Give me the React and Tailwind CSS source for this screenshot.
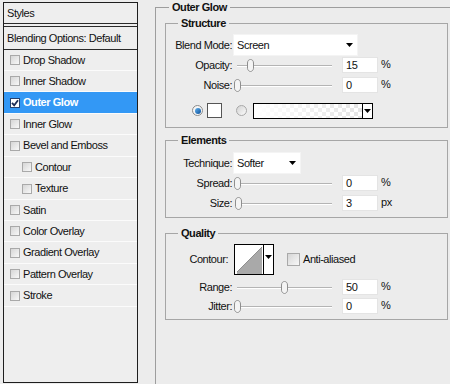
import React from "react";

function Checkbox({ checked, big }) {
  if (checked) {
    return (
      <span className="w-[10px] h-[10px] border border-[#26426e] bg-white flex items-center justify-center shrink-0">
        <svg width="8" height="8" viewBox="0 0 8 8">
          <path d="M1 3.8 L3.2 6.4 L7 1.2" stroke="#1d2d55" strokeWidth="1.8" fill="none" />
        </svg>
      </span>
    );
  }
  return (
    <span
      className={`block ${big ? "w-[13px] h-[13px]" : "w-[10px] h-[10px]"} border border-[#a9a9a9] bg-gradient-to-br from-[#d6d6d6] to-[#f8f8f8] shrink-0`}
    />
  );
}

const layers = [
  { label: "Drop Shadow", h: "h-[21px]" },
  { label: "Inner Shadow", h: "h-[21px]" },
  { label: "Outer Glow", h: "h-[22px]", selected: true },
  { label: "Inner Glow", h: "h-[21px]" },
  { label: "Bevel and Emboss", h: "h-[22px]" },
  { label: "Contour", h: "h-[21px]", indent: true },
  { label: "Texture", h: "h-[22px]", indent: true },
  { label: "Satin", h: "h-[21px]" },
  { label: "Color Overlay", h: "h-[21px]" },
  { label: "Gradient Overlay", h: "h-[22px]" },
  { label: "Pattern Overlay", h: "h-[21px]" },
  { label: "Stroke", h: "h-[22px]" },
];

function Thumb({ pos }) {
  return (
    <svg
      width="9"
      height="13"
      viewBox="0 0 9 13"
      className="absolute top-0"
      style={{ left: pos - 4 }}
    >
      <path
        d="M1.5 4 C1.5 1.6 3 0.5 4.5 0.5 C6 0.5 7.5 1.6 7.5 4 L7.5 9.3 C7.5 10.8 6 12.5 4.5 12.5 C3 12.5 1.5 10.8 1.5 9.3 Z"
        fill="#f4f4f4"
        stroke="#8e8e8e"
      />
    </svg>
  );
}

function Slider({ pos }) {
  return (
    <div className="relative w-[95px] h-[13px] ml-[5px] shrink-0">
      <div className="absolute left-0 right-0 top-[6px] h-[1px] bg-[#b4b4b4]" />
      <div className="absolute left-0 right-0 top-[7px] h-[1px] bg-white" />
      <Thumb pos={pos} />
    </div>
  );
}

function Label({ children, extra = "" }) {
  return <div className={`w-[66px] text-right shrink-0 ${extra}`}>{children}</div>;
}

function NumInput({ value }) {
  return (
    <div className="ml-[10px] w-[36px] h-[16px] bg-white border border-[#e4e4e4] pl-[3px] leading-[14px] shrink-0">
      {value}
    </div>
  );
}

function SliderRow({ label, pos, value, unit, mt }) {
  return (
    <div className={`flex items-center h-[16px] ${mt}`}>
      <Label>{label}</Label>
      <Slider pos={pos} />
      <NumInput value={value} />
      <div className="ml-[3px] leading-[12px] -mt-[3px]">{unit}</div>
    </div>
  );
}

function Arrow() {
  return (
    <svg width="7" height="4" viewBox="0 0 7 4" className="block">
      <path d="M0 0 L7 0 L3.5 4 Z" fill="#000" />
    </svg>
  );
}

function Section({ title, mt, h, children }) {
  return (
    <div className={`relative w-[283px] border border-[#a6a6a6] ${mt} ${h}`}>
      <span className="absolute left-[12px] top-[-8px] px-[3px] bg-[#ececec] font-bold leading-[14px]">
        {title}
      </span>
      {children}
    </div>
  );
}

function Radio({ on }) {
  return on ? (
    <span className="w-[11px] h-[11px] rounded-full border border-[#8a8a8a] bg-[#f6f6f6] flex items-center justify-center shrink-0">
      <span className="block w-[6px] h-[6px] rounded-full bg-gradient-to-br from-[#5fb1ee] to-[#0a4f98]" />
    </span>
  ) : (
    <span className="block w-[11px] h-[11px] rounded-full border border-[#a8a8a8] bg-gradient-to-br from-[#d4d4d4] to-[#fafafa] shrink-0" />
  );
}

export default function App() {
  return (
    <div className="w-[450px] h-[384px] bg-[#ececec] flex overflow-hidden text-[11px] tracking-[-0.45px] text-[#111] font-['Liberation_Sans',Arial,sans-serif]">
      {/* Left panel */}
      <div className="ml-[3px] mt-[2px] w-[135px] h-[381px] border border-[#1e1e1e] bg-[#eeeeee] shrink-0 flex flex-col">
        <div className="h-[21px] border-b border-[#2a2a2a] pl-[3px] flex items-center">Styles</div>
        <div className="h-[2px]" />
        <div className="h-[24px] border-t border-b border-[#2a2a2a] pl-[3px] flex items-center">
          Blending Options: Default
        </div>
        {layers.map((l) => (
          <div
            key={l.label}
            className={`flex items-center gap-[3px] border-b border-[#fbfbfb] ${l.h} ${
              l.indent ? "pl-[18px]" : "pl-[6px]"
            } ${l.selected ? "bg-[#3398f5] text-white font-bold" : ""}`}
          >
            <Checkbox checked={l.selected} />
            <span>{l.label}</span>
          </div>
        ))}
      </div>

      {/* Right panel */}
      <div className="relative ml-[17px] mt-[7px] w-[310px] h-[377px] border-l border-t border-[#9d9d9d] pl-[9px] shrink-0">
        <span className="absolute left-[13px] top-[-8px] px-[3px] bg-[#ececec] font-bold leading-[14px]">
          Outer Glow
        </span>

        <Section title="Structure" mt="mt-[15px]" h="h-[105px]">
          <div className="flex items-center h-[22px] mt-[10px]">
            <Label>Blend Mode:</Label>
            <div className="ml-[1px] w-[125px] h-[22px] bg-white border border-[#f4f4f4] flex items-center justify-between pl-[3px] pr-[4px]">
              <span>Screen</span>
              <Arrow />
            </div>
          </div>
          <SliderRow label="Opacity:" pos={13} value="15" unit="%" mt="mt-[1px]" />
          <SliderRow label="Noise:" pos={0} value="0" unit="%" mt="mt-[4px]" />
          <div className="flex items-center h-[15px] mt-[10px]">
            <div className="ml-[26px]">
              <Radio on />
            </div>
            <div className="ml-[4px] w-[15px] h-[15px] border border-[#555] bg-white" />
            <div className="ml-[14px]">
              <Radio />
            </div>
            <div className="ml-[6px] w-[120px] h-[16px] border border-black flex">
              <div className="flex-1 bg-[repeating-conic-gradient(#e0e0e0_0_25%,#ffffff_0_50%)] bg-[length:8px_8px]">
                <div className="w-full h-full bg-gradient-to-r from-white via-[rgba(255,255,255,0.55)] to-[rgba(255,255,255,0.15)]" />
              </div>
              <div className="w-[10px] border-l border-black bg-white flex items-center justify-center">
                <Arrow />
              </div>
            </div>
          </div>
        </Section>

        <Section title="Elements" mt="mt-[12px]" h="h-[78px]">
          <div className="flex items-center h-[22px] mt-[11px]">
            <Label>Technique:</Label>
            <div className="ml-[1px] w-[68px] h-[22px] bg-white border border-[#f4f4f4] flex items-center justify-between pl-[3px] pr-[4px]">
              <span>Softer</span>
              <Arrow />
            </div>
          </div>
          <SliderRow label="Spread:" pos={0} value="0" unit="%" mt="mt-[1px]" />
          <SliderRow label="Size:" pos={1} value="3" unit="px" mt="mt-[4px]" />
        </Section>

        <Section title="Quality" mt="mt-[15px]" h="h-[87px]">
          <div className="flex items-center h-[31px] mt-[10px]">
            <Label extra="pr-[4px]">Contour:</Label>
            <div className="ml-[2px] w-[40px] h-[31px] border border-black flex">
              <div className="flex-1 bg-white">
                <svg width="28" height="29" viewBox="0 0 28 29" className="block">
                  <path d="M2 27 L27 2 L27 29 L2 29 Z" fill="#a9a9a9" />
                  <path d="M2 27 L27 2" stroke="#8f8f8f" strokeWidth="1" />
                </svg>
              </div>
              <div className="w-[10px] border-l border-black bg-white flex justify-center pt-[10px]">
                <Arrow />
              </div>
            </div>
            <div className="ml-[13px]">
              <Checkbox big />
            </div>
            <span className="ml-[3px]">Anti-aliased</span>
          </div>
          <SliderRow label="Range:" pos={47} value="50" unit="%" mt="mt-[4px]" />
          <SliderRow label="Jitter:" pos={0} value="0" unit="%" mt="mt-[3px]" />
        </Section>
      </div>
    </div>
  );
}
